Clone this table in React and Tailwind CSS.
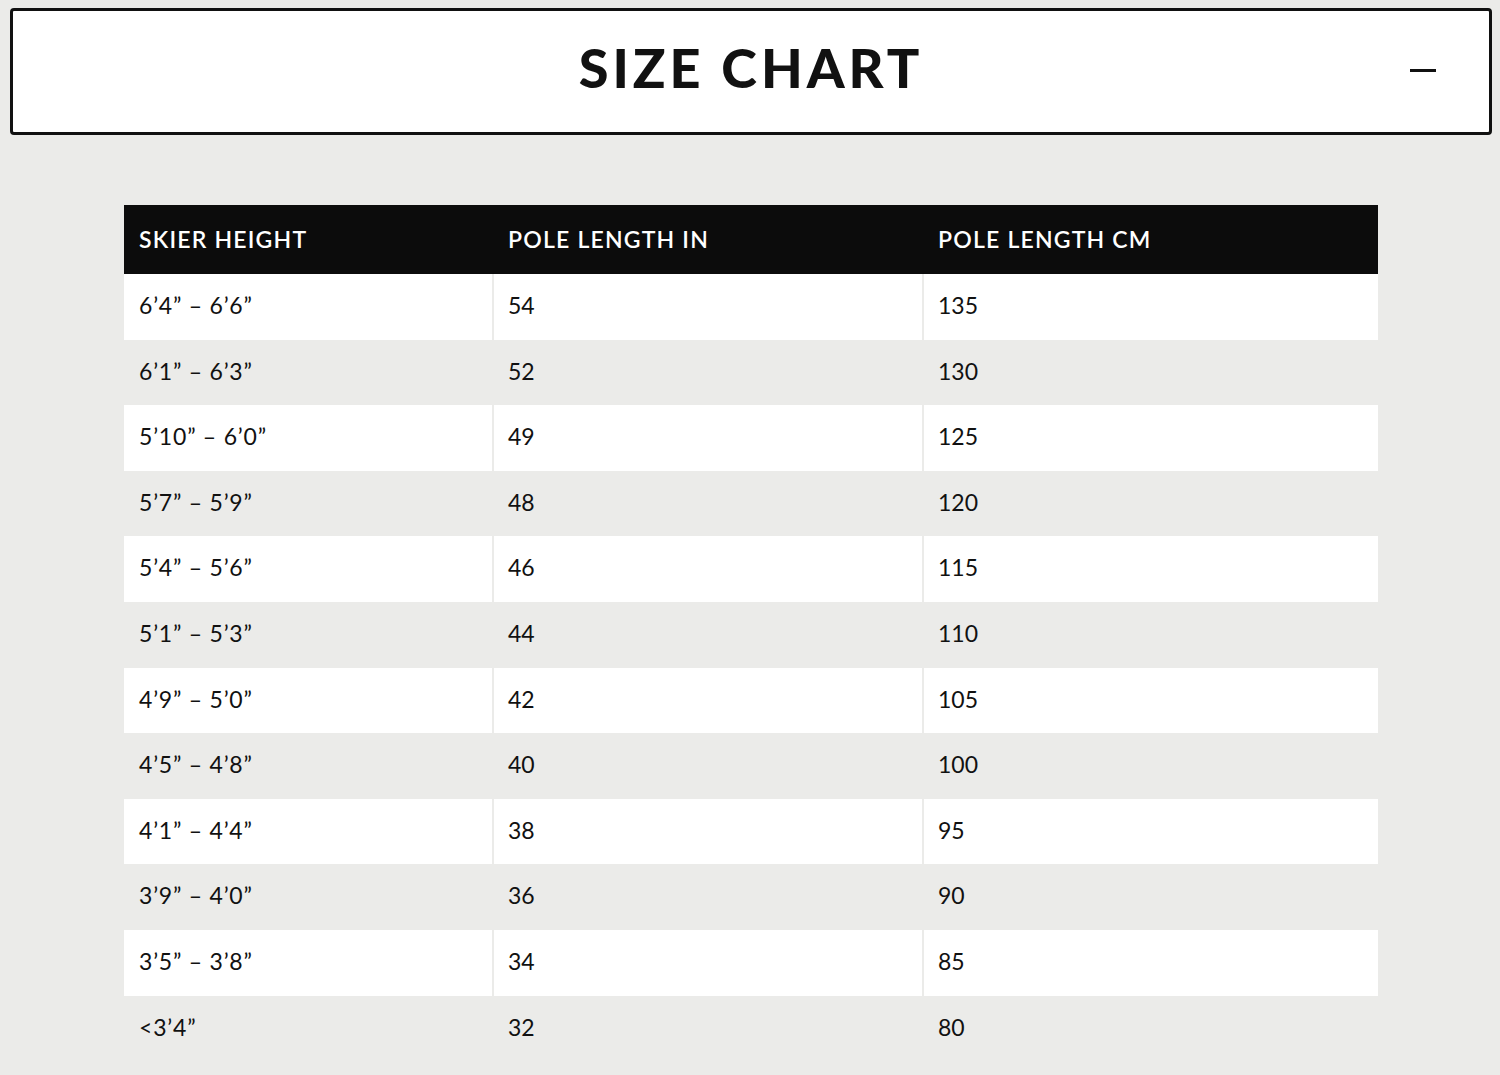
const rows = [
  ['6’4” – 6’6”', '54', '135'],
  ['6’1” – 6’3”', '52', '130'],
  ['5’10” – 6’0”', '49', '125'],
  ['5’7” – 5’9”', '48', '120'],
  ['5’4” – 5’6”', '46', '115'],
  ['5’1” – 5’3”', '44', '110'],
  ['4’9” – 5’0”', '42', '105'],
  ['4’5” – 4’8”', '40', '100'],
  ['4’1” – 4’4”', '38', '95'],
  ['3’9” – 4’0”', '36', '90'],
  ['3’5” – 3’8”', '34', '85'],
  ['<3’4”', '32', '80'],
];

export default function App() {
  return (
    <div className="min-h-[1075px] w-[1500px] bg-[#ebebe9] pt-2 font-['Lato',sans-serif] text-[#111]">
      <div className="relative ml-[10px] flex h-[127px] w-[1482px] items-center justify-center rounded-[4px] border-[3px] border-[#111] bg-white">
        <h1 className="-mt-[9px] text-[54px] font-black tracking-[4px] text-[#111]">SIZE CHART</h1>
        <span className="absolute right-[53px] top-[58px] h-[3px] w-[26px] bg-[#111]" />
      </div>

      <div className="ml-[124px] mt-[70px] w-[1254px]">
        <div className="grid h-[69px] grid-cols-[370px_430px_454px] items-center bg-[#0c0c0c] text-[23px] font-semibold tracking-[1.2px] text-white">
          <div className="pl-[15px]">SKIER HEIGHT</div>
          <div className="pl-[14px]">POLE LENGTH IN</div>
          <div className="pl-[14px]">POLE LENGTH CM</div>
        </div>
        {rows.map((r, i) => (
          <div key={i} className="grid h-[65.6px] grid-cols-[368px_428px_454px] gap-x-[2px] text-[23px]">
            {r.map((c, j) => (
              <div
                key={j}
                className={`flex items-center pb-[3px] ${j === 0 ? 'pl-[15px] tracking-[0.8px]' : 'pl-[14px]'} ${i % 2 === 0 ? 'bg-white' : ''}`}
              >
                {c}
              </div>
            ))}
          </div>
        ))}
      </div>
    </div>
  );
}
